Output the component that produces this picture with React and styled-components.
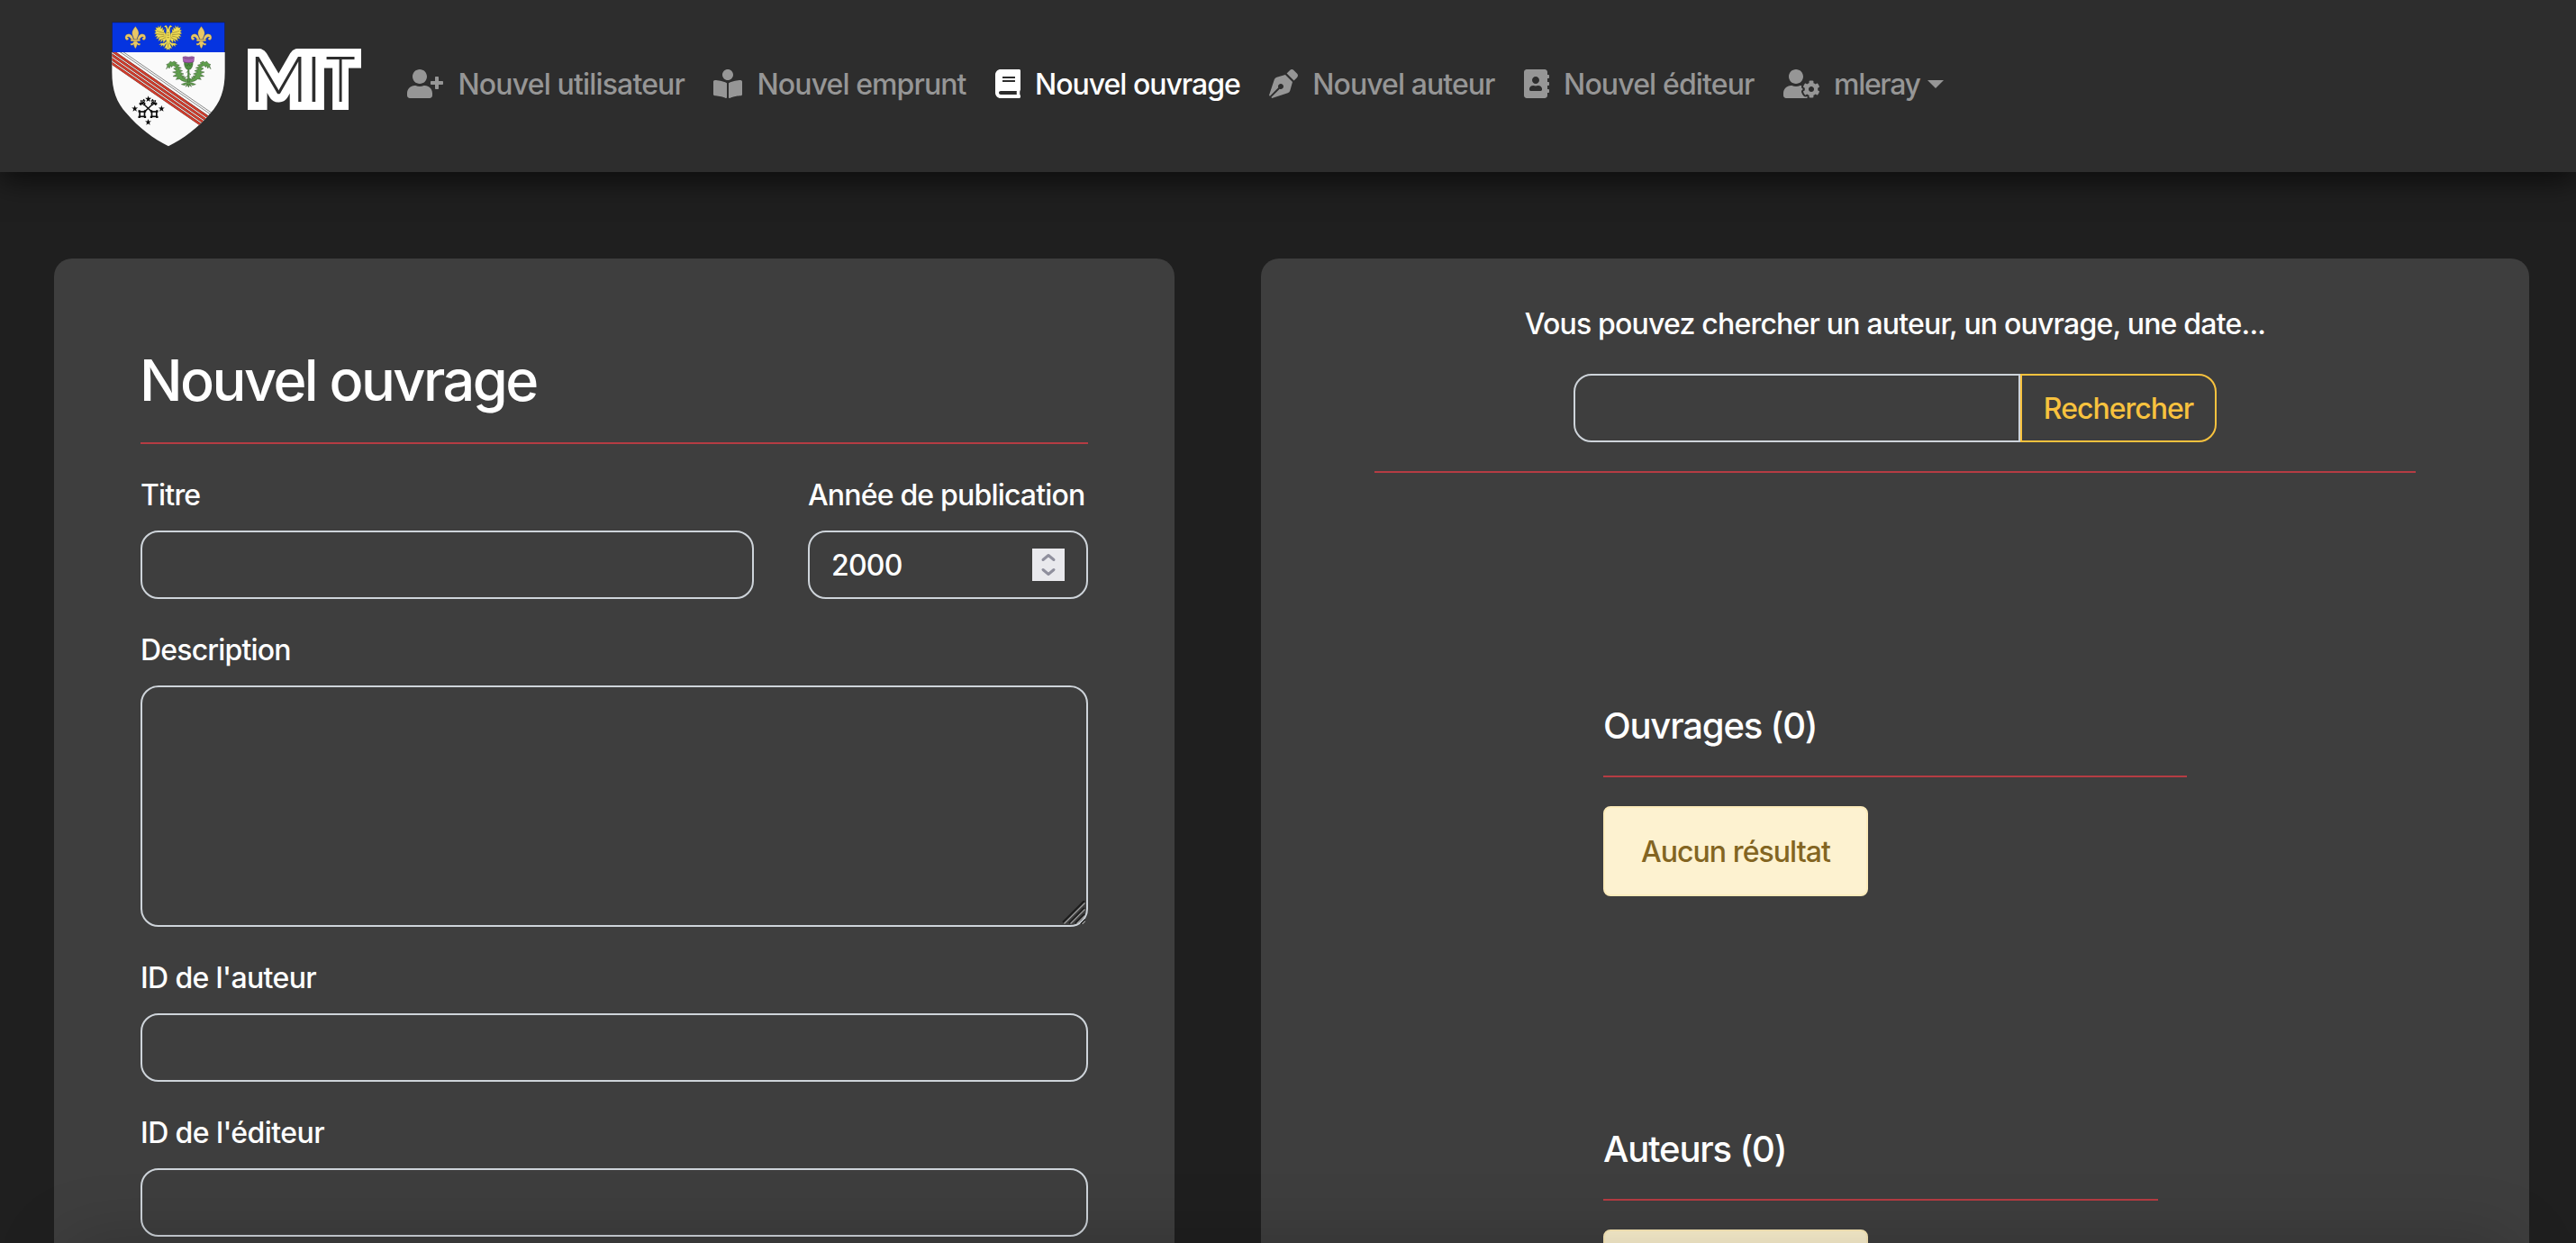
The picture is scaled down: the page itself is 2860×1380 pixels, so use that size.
import React from "react";
import styled, { createGlobalStyle } from "styled-components";
import { FaUserPlus, FaBookReader, FaBook, FaPenNib, FaAddressBook, FaUserCog } from "react-icons/fa";

const GlobalStyle = createGlobalStyle`
  * { box-sizing: border-box; }
  html, body { margin: 0; height: 100%; overflow: hidden; background: #1f1f1f; }
  body { font-family: Inter, "Liberation Sans", sans-serif; font-size: 32px; font-weight: 450; line-height: 50px; color: #fff; letter-spacing: -0.82px; }
  input, textarea, button { font: inherit; letter-spacing: inherit; color: inherit; margin: 0; }
`;

const Page = styled.div`
  height: 100vh;
  overflow: hidden;
`;

const Header = styled.header`
  display: flex;
  align-items: center;
  height: 191px;
  padding: 0 124px 5px;
  background: #2d2d2d;
  position: relative;
  box-shadow: 0 10px 30px rgba(0, 0, 0, 0.6);
`;

const Brand = styled.a`
  display: flex;
  align-items: center;
  gap: 25px;
  width: 312px;
`;

const Shield = styled.svg`
  display: block;
  width: 126px;
  height: 139px;
`;

const Wordmark = styled.svg`
  display: block;
  width: 127px;
  height: 68px;
  margin-bottom: 10px;
`;

const Nav = styled.nav`
  display: flex;
`;

const NavItem = styled.a`
  display: flex;
  align-items: center;
  gap: 16.5px;
  padding: 0 16px;
  white-space: nowrap;
  letter-spacing: ${(p) => p.$tracking}px;
  color: ${(p) => (p.$active ? "#fff" : "#969696")};
  svg { display: block; flex: none; }
`;

const NavLabel = styled.span`
  padding-top: 2px;
`;

const Caret = styled.span`
  margin-left: -8px;
  border: 9.5px solid transparent;
  border-top-color: currentColor;
  border-bottom: 0;
`;

const Main = styled.main`
  display: grid;
  grid-template-columns: 1244px 1408px;
  gap: 96px;
  padding: 96px 60px 0;
`;

const Card = styled.section`
  height: 1400px;
  border-radius: 20px;
  background: #3e3e3e;
  padding: ${(p) => p.$padding};
`;

const Title = styled.h1`
  margin: 0 0 -2px;
  font-size: 63px;
  font-weight: 500;
  line-height: 78px;
  letter-spacing: -2.55px;
  text-indent: -1px;
`;

const Rule = styled.hr`
  width: ${(p) => p.$width || "100%"};
  height: 2px;
  margin: 32px 0;
  border: 0;
  background: #b53c43;
`;

const FormRow = styled.div`
  display: grid;
  grid-template-columns: 681px 311px;
  gap: 60px;
`;

const Field = styled.label`
  display: flex;
  flex-direction: column;
  gap: 14px;
  margin-bottom: 32px;
  letter-spacing: ${(p) => p.$tracking || -0.82}px;
`;

const Input = styled.input`
  width: 100%;
  height: 76px;
  padding: 0 23px;
  border: 2px solid #ced4da;
  border-radius: 20px;
  background: transparent;
  outline: none;
`;

const NumberBox = styled.div`
  display: flex;
  align-items: center;
  justify-content: space-between;
  height: 76px;
  padding: 0 24px;
  border: 2px solid #ced4da;
  border-radius: 20px;
  letter-spacing: -0.8px;
`;

const NumberInput = styled.input`
  width: 160px;
  padding: 2px 0 0;
  border: 0;
  background: transparent;
  outline: none;
`;

const Spinner = styled.svg`
  display: block;
  width: 36px;
  height: 36px;
  background: #e9e9ed;
`;

const AreaBox = styled.div`
  position: relative;
  height: 268px;
`;

const TextArea = styled.textarea`
  display: block;
  width: 100%;
  height: 100%;
  padding: 12px 23px;
  border: 2px solid #ced4da;
  border-radius: 20px;
  background: transparent;
  resize: none;
  outline: none;
`;

const Grip = styled.svg`
  position: absolute;
  right: 3px;
  bottom: 3px;
  width: 26px;
  height: 26px;
`;

const Hint = styled.p`
  margin: 0 0 30px;
  text-align: center;
  letter-spacing: -0.8px;
`;

const Search = styled.form`
  display: flex;
  width: 714px;
  margin: 0 auto;
`;

const SearchInput = styled(Input)`
  flex: 1;
  border-radius: 20px 0 0 20px;
`;

const SearchButton = styled.button`
  width: 218px;
  height: 76px;
  padding: 2px 0 0;
  border: 2px solid #f8c23e;
  border-radius: 0 20px 20px 0;
  background: transparent;
  color: #f8c23e;
  letter-spacing: -1px;
`;

const Results = styled.div`
  margin: 256px 0 0 254px;
`;

const ResultsTitle = styled.h2`
  margin: 0 0 -2px;
  font-size: 40px;
  font-weight: 530;
  line-height: 50px;
  letter-spacing: -1.18px;
`;

const Alert = styled.div`
  display: flex;
  align-items: center;
  justify-content: center;
  width: 294px;
  height: 100px;
  padding-top: 2px;
  border: 2px solid #fdecbb;
  border-radius: 8px;
  background: #fdf2d0;
  color: #836522;
  letter-spacing: -0.93px;
`;

const BottomShade = styled.div`
  position: fixed;
  left: 70px;
  right: 70px;
  bottom: -200px;
  height: 200px;
  border-radius: 20px;
  box-shadow: 0 0 80px rgba(0, 0, 0, 0.2);
  pointer-events: none;
`;

const STAR = "M0-11L2.6-3.4L10.5-3.4L4.2 1.3L6.5 9L0 4.4L-6.5 9L-4.2 1.3L-10.5-3.4L-2.6-3.4Z";

function FleurDeLis({ x }) {
  return (
    <g transform={`translate(${x} 88)`} fill="#e8c766" stroke="#5b5130" strokeWidth="0.8">
      <path d="M0 0C-6 9-12 15-11 24C-10 32-6 36-5 43H5C6 36 10 32 11 24C12 15 6 9 0 0Z" />
      <path d="M-6 45C-8 32-15 24-24 25C-32 26-36 33-34 40C-32 46-26 47-23 43C-21 38-27 38-27 36C-23 32-15 38-14 45Z" />
      <path d="M6 45C8 32 15 24 24 25C32 26 36 33 34 40C32 46 26 47 23 43C21 38 27 38 27 36C23 32 15 38 14 45Z" />
      <path d="M-5 48C-6 54-10 58-16 56C-19 62-11 66-6 60C-5 66-3 70 0 74C3 70 5 66 6 60C11 66 19 62 16 56C10 58 6 54 5 48Z" />
      <rect x="-16" y="43" width="32" height="6" rx="2" />
    </g>
  );
}

function EagleWing() {
  return (
    <g>
      <path d="M-8 30L-14 22L-12 13L-18 18L-17 7L-24 13L-23 1L-30 9L-32 2L-35 10L-42 8L-39 16L-46 18L-40 23L-46 29L-38 31L-44 39L-35 38L-40 47L-30 44L-33 54L-24 48L-25 59L-17 50L-16 60L-9 51L-4 50Z" />
      <path d="M-4 52L-12 60L-24 61L-31 67L-23 66L-25 73L-17 67L-15 74L-10 66L-3 60Z" />
    </g>
  );
}

function Eagle() {
  return (
    <g transform="translate(260 83)" fill="#efdc55" stroke="#5a5120" strokeWidth="0.7">
      <EagleWing />
      <g transform="scale(-1 1)"><EagleWing /></g>
      <path d="M0 14C-2 7-4 2-8 1L-14 6L-8 8C-6 13-5 18-7 24L-9 44L-4 58L-10 72L-13 79L-6 77L-5 84L0 80L5 84L6 77L13 79L10 72L4 58L9 44L7 24C5 18 6 13 8 8L14 6L8 1C4 2 2 7 0 14Z" />
      <path d="M-38 20L-14 27M-39 30L-13 33M-34 42L-12 37M-25 50L-10 42M38 20L14 27M39 30L13 33M34 42L12 37M25 50L10 42M-4 26H4M-4 34H4M-4 42H4M0 60V76" fill="none" stroke="#6f6322" strokeWidth="1.6" />
    </g>
  );
}

function ThistleLeaf() {
  return (
    <path d="M0 84C-10 85-22 83-30 75L-42 77L-36 68L-52 66L-39 58L-53 52L-39 49L-50 40L-40 36L-52 30L-57 36L-60 30L-64 40L-68 35L-74 42L-70 30L-74 27L-67 24L-60 16L-55 20L-48 16L-38 22L-46 24L-30 29L-36 34L-24 38L-33 42L-20 48L-30 52L-16 58L-26 62L-14 66L-21 70L-10 69L-13 75L0 75Z" />
  );
}

function Thistle() {
  return (
    <g transform="translate(328 188)" fill="#5f9e4d" stroke="#28471f" strokeWidth="1.2">
      <ThistleLeaf />
      <g transform="scale(-1 1)"><ThistleLeaf /></g>
      <path d="M-2 40H2L3 88L10 101L3 96L0 103L-3 96L-10 101L-3 88Z" />
      <path d="M-24 93L-12 88L0 85L12 88L24 93L13 96L7 92L0 94L-7 92L-13 96Z" />
      <path d="M-14 18H14C16 30 10 39 6 43H-6C-10 39-16 30-14 18Z" fill="#4f8e43" />
      <path d="M-19 2L-11 0L0 2L11 0L19 2L17 18C9 22-9 22-17 18Z" fill="#a95db4" stroke="#4e2457" />
      <path d="M-15 5C-6 8 6 8 15 5M-12 25L-4 32L0 24L5 32L12 25" fill="none" />
      <path d="M0 48L-8 54M0 56L8 61M0 64L-9 69M0 72L9 77" fill="none" strokeWidth="2.4" stroke="#3c7433" />
    </g>
  );
}

function Key() {
  return (
    <g>
      <path d="M17 -17L-15 13" stroke="#0b0b0b" strokeWidth="4.5" />
      <path d="M9-27L15-33L19-27L26-29L25-22L31-17L25-10L20-15L15-10L8-17L13-22Z" fill="#0b0b0b" />
      <path d="M13-27L18-22M19-26L25-19M14-17L18-13" stroke="#fafafa" strokeWidth="1.8" />
    </g>
  );
}

function CrossedKeys() {
  return (
    <g transform="translate(193.5 362)">
      <Key />
      <g transform="scale(-1 1)"><Key /></g>
      {[-20, 20].map((x) => (
        <g key={x} transform={`translate(${x} 18)`}>
          <rect x="-8" y="-8" width="16" height="16" fill="#fafafa" stroke="#0b0b0b" strokeWidth="5" />
          <path d="M-13-13H-6V-6H-13ZM6-13H13V-6H6ZM-13 6H-6V13H-13ZM6 6H13V13H6Z" fill="#0b0b0b" />
        </g>
      ))}
    </g>
  );
}

function CoatOfArms() {
  return (
    <Shield viewBox="72 72 378 417">
      <defs>
        <clipPath id="field">
          <path d="M73 174H449V240C449 300 434 342 400 378C360 425 310 463 261 487C212 463 162 425 122 378C88 342 73 300 73 240Z" />
        </clipPath>
      </defs>
      <path d="M73 74H449V240C449 300 434 342 400 378C360 425 310 463 261 487C212 463 162 425 122 378C88 342 73 300 73 240Z" fill="#fafafa" />
      <g clipPath="url(#field)">
        {[169, 183, 197, 211].map((y) => (
          <g key={y}>
            <path d={`M53 ${y - 13.8}L473 ${y + 276}`} stroke="#4a2a26" strokeWidth="8.4" />
            <path d={`M53 ${y - 13.8}L473 ${y + 276}`} stroke="#d23c2c" strokeWidth="6.8" />
          </g>
        ))}
        <path d="M73 154.5L473 430.5M73 147L473 423" stroke="#222" strokeWidth="1.6" />
      </g>
      <path d="M73 74H449V174H73Z" fill="#0534e0" />
      <path d="M73 174V74H449V174" fill="none" stroke="#0b0f2c" strokeWidth="2.5" />
      <FleurDeLis x={151} />
      <Eagle />
      <FleurDeLis x={370.5} />
      <Thistle />
      <CrossedKeys />
      {[[194, 330], [149, 362], [238, 362], [193.5, 407]].map(([x, y]) => (
        <path key={`${x}-${y}`} d={STAR} transform={`translate(${x} ${y})`} fill="#0b0b0b" />
      ))}
    </Shield>
  );
}

const InlineLetter = styled.text`
  font-family: Lato, sans-serif;
  font-weight: 300;
  font-size: 211px;
  letter-spacing: 0;
  fill: #2d2d2d;
  stroke: #fff;
  stroke-width: ${(p) => p.$outline}px;
  stroke-linejoin: miter;
  stroke-miterlimit: 3;
  paint-order: stroke;
`;

function Logo() {
  return (
    <Brand>
      <CoatOfArms />
      <Wordmark viewBox="526 162 381 204">
        <InlineLetter $outline={55} transform="translate(530 340) scale(1.03 1)">M</InlineLetter>
        <InlineLetter $outline={58} transform="translate(719 340)">I</InlineLetter>
        <InlineLetter $outline={56} transform="translate(786 340) scale(0.8 1)">T</InlineLetter>
      </Wordmark>
    </Brand>
  );
}

const NAV = [
  { label: "Nouvel utilisateur", icon: FaUserPlus, width: 40, tracking: -0.84 },
  { label: "Nouvel emprunt", icon: FaBookReader, width: 32, tracking: -0.91 },
  { label: "Nouvel ouvrage", icon: FaBook, width: 28, tracking: -1.02, active: true },
  { label: "Nouvel auteur", icon: FaPenNib, width: 32, tracking: -0.93 },
  { label: "Nouvel éditeur", icon: FaAddressBook, width: 28, tracking: -0.86 },
  { label: "mleray", icon: FaUserCog, width: 40, tracking: -1.35, menu: true },
];

function ResultGroup({ title, ruleWidth }) {
  return (
    <Results>
      <ResultsTitle>{title}</ResultsTitle>
      <Rule $width={ruleWidth} />
      <Alert>Aucun résultat</Alert>
    </Results>
  );
}

export default function App() {
  return (
    <Page>
      <GlobalStyle />
      <Header>
        <Logo />
        <Nav>
          {NAV.map(({ label, icon: Icon, width, tracking, active, menu }) => (
            <NavItem key={label} $active={active} $tracking={tracking}>
              <Icon style={{ width, height: 32 }} />
              <NavLabel>{label}</NavLabel>
              {menu && <Caret />}
            </NavItem>
          ))}
        </Nav>
      </Header>
      <Main>
        <Card $padding="96px">
          <Title>Nouvel ouvrage</Title>
          <Rule />
          <FormRow>
            <Field>Titre<Input /></Field>
            <Field>
              Année de publication
              <NumberBox>
                <NumberInput defaultValue="2000" inputMode="numeric" />
                <Spinner viewBox="0 0 36 36" fill="none" stroke="#8f8f9d" strokeWidth="3" strokeLinecap="round" strokeLinejoin="round">
                  <path d="M12 12.5L18 7.5L24 12.5M12 23.5L18 28.5L24 23.5" />
                </Spinner>
              </NumberBox>
            </Field>
          </FormRow>
          <Field>
            Description
            <AreaBox>
              <TextArea />
              <Grip viewBox="0 0 26 26" fill="none">
                <path d="M1 24L25 0M8 25L25 8M15 25L25 15M21 26L26 21" stroke="#1c1c1c" strokeWidth="2" />
                <path d="M2.5 25.5L25.5 2.5M9.5 25.5L25.5 9.5M16.5 25.5L25.5 16.5M22.5 26L26 22.5" stroke="#a0a0a0" strokeWidth="1.2" />
              </Grip>
            </AreaBox>
          </Field>
          <Field $tracking={-0.64}>ID de l'auteur<Input /></Field>
          <Field $tracking={-0.58}>ID de l'éditeur<Input /></Field>
        </Card>
        <Card $padding="48px 126px">
          <Hint>Vous pouvez chercher un auteur, un ouvrage, une date...</Hint>
          <Search>
            <SearchInput />
            <SearchButton type="button">Rechercher</SearchButton>
          </Search>
          <Rule />
          <ResultGroup title="Ouvrages (0)" ruleWidth="648px" />
          <ResultGroup title="Auteurs (0)" ruleWidth="616px" />
        </Card>
      </Main>
      <BottomShade />
    </Page>
  );
}
